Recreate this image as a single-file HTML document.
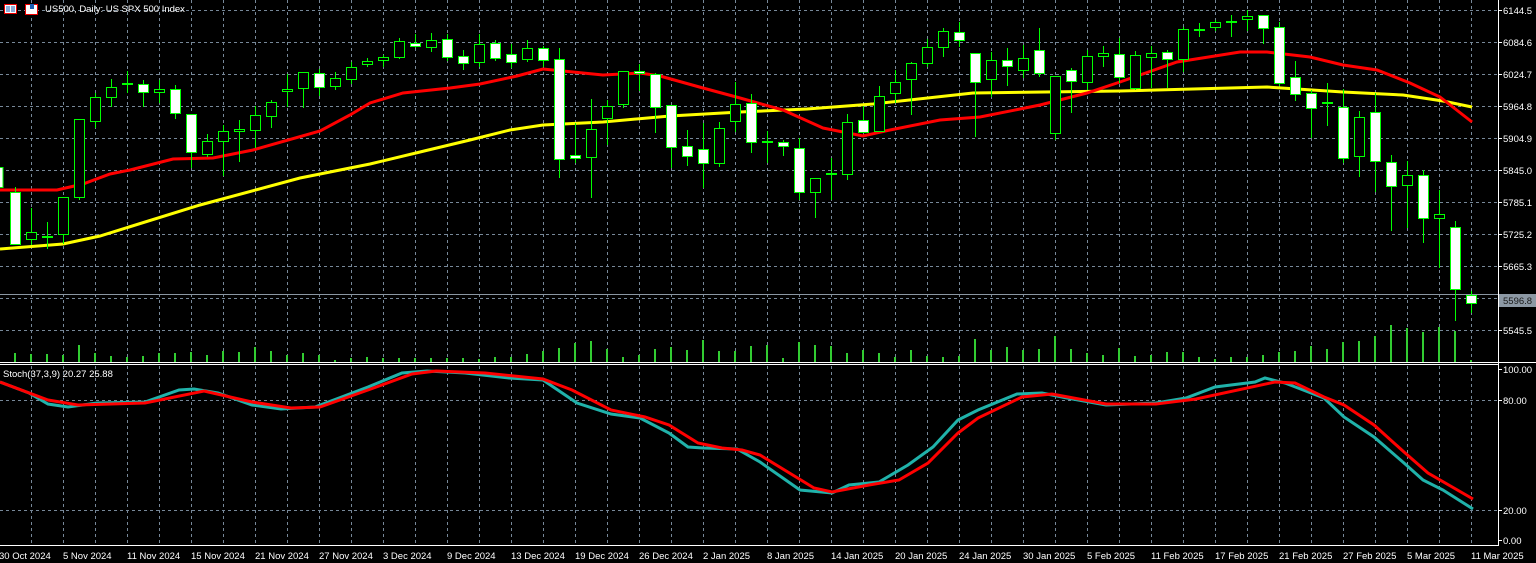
<!DOCTYPE html>
<html><head><meta charset="utf-8"><style>
html,body{margin:0;padding:0;background:#000;overflow:hidden}
svg{display:block}
text{font-family:"Liberation Sans",sans-serif;font-size:9.5px;fill:#fff}
</style></head><body>
<svg width="1536" height="563" viewBox="0 0 1536 563" xmlns="http://www.w3.org/2000/svg">
<rect width="1536" height="563" fill="#000"/>
<g stroke="#778899" stroke-width="1" stroke-dasharray="3,3" fill="none">
<path d="M0 10.5H1498M0 42.5H1498M0 74.5H1498M0 106.5H1498M0 138.5H1498M0 170.5H1498M0 202.5H1498M0 234.5H1498M0 266.5H1498M0 298.5H1498M0 330.5H1498"/>
<path d="M0 400.5H1498M0 510.5H1498"/>
<path d="M31.5 0V545M63.5 0V545M95.5 0V545M127.5 0V545M159.5 0V545M191.5 0V545M223.5 0V545M255.5 0V545M287.5 0V545M319.5 0V545M351.5 0V545M383.5 0V545M415.5 0V545M447.5 0V545M479.5 0V545M511.5 0V545M543.5 0V545M575.5 0V545M607.5 0V545M639.5 0V545M671.5 0V545M703.5 0V545M735.5 0V545M767.5 0V545M799.5 0V545M831.5 0V545M863.5 0V545M895.5 0V545M927.5 0V545M959.5 0V545M991.5 0V545M1023.5 0V545M1055.5 0V545M1087.5 0V545M1119.5 0V545M1151.5 0V545M1183.5 0V545M1215.5 0V545M1247.5 0V545M1279.5 0V545M1311.5 0V545M1343.5 0V545M1375.5 0V545M1407.5 0V545M1439.5 0V545M1471.5 0V545"/>
</g>
<line x1="0" y1="294.5" x2="1498" y2="294.5" stroke="#8a96a2" stroke-width="1"/>
<g stroke="#32cd32" stroke-width="2">
<path d="M15 362v-9M31 362v-8M47 362v-8M63 362v-7M79 362v-17M95 362v-9M111 362v-6M127 362v-5M143 362v-6M159 362v-9M175 362v-9M191 362v-10M207 362v-7M223 362v-11M239 362v-10M255 362v-15M271 362v-11M287 362v-7M303 362v-9M319 362v-7M335 362v-2M351 362v-4M367 362v-5M383 362v-4M399 362v-4M415 362v-4M431 362v-4M447 362v-4M463 362v-4M479 362v-3M495 362v-5M511 362v-5M527 362v-8M543 362v-11M559 362v-14M575 362v-19M591 362v-21M607 362v-13M623 362v-5M639 362v-7M655 362v-13M671 362v-15M687 362v-12M703 362v-22M719 362v-11M735 362v-11M751 362v-16"/>
<path d="M767 362v-17M783 362v-4M799 362v-20M815 362v-17M831 362v-16M847 362v-9M863 362v-12M879 362v-9M895 362v-5M911 362v-12M927 362v-6M943 362v-5M959 362v-6M975 362v-23M991 362v-12M1007 362v-15M1023 362v-12M1039 362v-13M1055 362v-26M1071 362v-13M1087 362v-9M1103 362v-7M1119 362v-14M1135 362v-6M1151 362v-7M1167 362v-10M1183 362v-10M1199 362v-5M1215 362v-3M1231 362v-5M1247 362v-5M1263 362v-7M1279 362v-10M1295 362v-11M1311 362v-16M1327 362v-13M1343 362v-20M1359 362v-21M1375 362v-26M1391 362v-37M1407 362v-34M1423 362v-30M1439 362v-35M1455 362v-31M1471 362v-2"/>
</g>
<polyline fill="none" stroke="#ffff00" stroke-width="3" points="0,249 63,244 100,236 200,205 300,178 370,164 420,152 470,140 510,130 543,125 603,122 670,116 740,112 807,109 873,104 973,93 1120,91 1193,89 1267,87 1343,92 1403,95 1443,101 1472,107"/>
<polyline fill="none" stroke="#ff0000" stroke-width="3" points="0,190 57,190 83,184 110,174 130,170 173,159 213,158 253,150 320,131 350,115 370,103 403,93 450,88 480,84 517,76 543,69 603,75 640,73 660,76 703,88 740,98 783,110 823,128 863,136 890,130 940,120 980,117 1040,105 1087,93 1120,82 1177,62 1240,52 1267,52 1310,57 1343,65 1377,70 1410,83 1440,97 1472,122"/>
<g stroke="#00ff00" stroke-width="1">
<path d="M-1.5 160V190M15.5 187V244M31.5 208V245M47.5 222V249M63.5 197V244M79.5 119V200M95.5 93V128M111.5 79V107M127.5 71V93M143.5 80V107M159.5 80V103M175.5 85V119M191.5 114V168M207.5 134V157M223.5 125V176M239.5 120V162M255.5 106V148M271.5 100V128M287.5 74V107M303.5 72V108M319.5 69V96M335.5 72V90M351.5 62V84M367.5 58V67M383.5 55V67M399.5 38V59M415.5 34V48M431.5 33V52M447.5 34V61M463.5 50V70M479.5 34V67M495.5 40V61M511.5 44V68M527.5 40V62M543.5 46V67M559.5 48V178M575.5 123V163M591.5 99V198M607.5 100V145M623.5 71V108M639.5 64V91M655.5 73V133M671.5 105V168M687.5 130V166M703.5 123V188M719.5 122V167M735.5 82V132M751.5 94V153M767.5 131V163M783.5 140V156M799.5 138V200M815.5 178V218M831.5 158V200M847.5 114V180M863.5 106V132M879.5 86V131M895.5 70V103M911.5 62V115M927.5 39V67M943.5 28V57M959.5 22V47M975.5 53V137M991.5 52V97M1007.5 48V86M1023.5 45V78M1039.5 28V77M1055.5 76V140M1071.5 68V113M1087.5 50V90M1103.5 46V67M1119.5 38V83M1135.5 51V90M1151.5 46V88M1167.5 50V88M1183.5 27V72M1199.5 23V37M1215.5 20V31M1231.5 15V37M1247.5 10V31M1263.5 15V44M1279.5 22V86M1295.5 61V101M1311.5 90V138M1327.5 83V126M1343.5 89V163M1359.5 111V177M1375.5 93V192M1391.5 155V231M1407.5 161V228M1423.5 170V243M1439.5 190V268M1455.5 221V321M1471.5 291V313"/>
</g>
<g stroke="#00ff00" stroke-width="2">
<path d="M42 237H53M122 84H133M762 142H773M826 174H837M1194 30H1205M1226 22H1237M1322 103H1333"/>
</g>
<g stroke="#00ff00" stroke-width="1" fill="#fff">
<rect x="-6" y="167.5" width="9" height="20"/>
<rect x="10.5" y="192.5" width="10" height="52"/>
<rect x="138.5" y="84.5" width="10" height="8"/>
<rect x="170.5" y="89.5" width="10" height="24"/>
<rect x="186.5" y="114.5" width="10" height="38"/>
<rect x="314.5" y="73.5" width="10" height="14"/>
<rect x="410.5" y="43.5" width="10" height="3"/>
<rect x="442.5" y="39.5" width="10" height="18"/>
<rect x="458.5" y="56.5" width="10" height="7"/>
<rect x="490.5" y="43.5" width="10" height="15"/>
<rect x="506.5" y="54.5" width="10" height="8"/>
<rect x="538.5" y="48.5" width="10" height="12"/>
<rect x="554.5" y="59.5" width="10" height="100"/>
<rect x="570.5" y="155.5" width="10" height="3"/>
<rect x="634.5" y="71.5" width="10" height="2"/>
<rect x="650.5" y="74.5" width="10" height="33"/>
<rect x="666.5" y="105.5" width="10" height="42"/>
<rect x="682.5" y="146.5" width="10" height="10"/>
<rect x="698.5" y="149.5" width="10" height="14"/>
<rect x="746.5" y="103.5" width="10" height="39"/>
<rect x="778.5" y="142.5" width="10" height="4"/>
<rect x="794.5" y="148.5" width="10" height="44"/>
<rect x="858.5" y="120.5" width="10" height="12"/>
<rect x="954.5" y="32.5" width="10" height="8"/>
<rect x="970.5" y="53.5" width="10" height="29"/>
<rect x="1002.5" y="60.5" width="10" height="6"/>
<rect x="1034.5" y="50.5" width="10" height="23"/>
<rect x="1066.5" y="70.5" width="10" height="11"/>
<rect x="1114.5" y="54.5" width="10" height="23"/>
<rect x="1162.5" y="52.5" width="10" height="7"/>
<rect x="1258.5" y="15.5" width="10" height="13"/>
<rect x="1274.5" y="27.5" width="10" height="56"/>
<rect x="1290.5" y="77.5" width="10" height="17"/>
<rect x="1306.5" y="93.5" width="10" height="15"/>
<rect x="1338.5" y="107.5" width="10" height="51"/>
<rect x="1370.5" y="112.5" width="10" height="49"/>
<rect x="1386.5" y="162.5" width="10" height="24"/>
<rect x="1418.5" y="175.5" width="10" height="43"/>
<rect x="1450.5" y="227.5" width="10" height="62"/>
<rect x="1466.5" y="295.5" width="10" height="8"/>
</g>
<g stroke="#00ff00" stroke-width="1" fill="#000">
<rect x="26.5" y="232.5" width="10" height="7"/>
<rect x="58.5" y="197.5" width="10" height="37"/>
<rect x="74.5" y="119.5" width="10" height="78"/>
<rect x="90.5" y="97.5" width="10" height="24"/>
<rect x="106.5" y="87.5" width="10" height="10"/>
<rect x="154.5" y="89.5" width="10" height="3"/>
<rect x="202.5" y="141.5" width="10" height="13"/>
<rect x="218.5" y="131.5" width="10" height="10"/>
<rect x="234.5" y="129.5" width="10" height="2"/>
<rect x="250.5" y="115.5" width="10" height="15"/>
<rect x="266.5" y="102.5" width="10" height="14"/>
<rect x="282.5" y="89.5" width="10" height="2"/>
<rect x="298.5" y="72.5" width="10" height="16"/>
<rect x="330.5" y="78.5" width="10" height="8"/>
<rect x="346.5" y="67.5" width="10" height="12"/>
<rect x="362.5" y="61.5" width="10" height="3"/>
<rect x="378.5" y="57.5" width="10" height="3"/>
<rect x="394.5" y="41.5" width="10" height="16"/>
<rect x="426.5" y="40.5" width="10" height="7"/>
<rect x="474.5" y="44.5" width="10" height="18"/>
<rect x="522.5" y="48.5" width="10" height="11"/>
<rect x="586.5" y="129.5" width="10" height="28"/>
<rect x="602.5" y="106.5" width="10" height="12"/>
<rect x="618.5" y="71.5" width="10" height="33"/>
<rect x="714.5" y="128.5" width="10" height="35"/>
<rect x="730.5" y="104.5" width="10" height="17"/>
<rect x="810.5" y="178.5" width="10" height="14"/>
<rect x="842.5" y="122.5" width="10" height="52"/>
<rect x="874.5" y="96.5" width="10" height="35"/>
<rect x="890.5" y="82.5" width="10" height="11"/>
<rect x="906.5" y="63.5" width="10" height="16"/>
<rect x="922.5" y="47.5" width="10" height="16"/>
<rect x="938.5" y="31.5" width="10" height="16"/>
<rect x="986.5" y="60.5" width="10" height="19"/>
<rect x="1018.5" y="58.5" width="10" height="12"/>
<rect x="1050.5" y="76.5" width="10" height="57"/>
<rect x="1082.5" y="56.5" width="10" height="26"/>
<rect x="1098.5" y="53.5" width="10" height="3"/>
<rect x="1130.5" y="55.5" width="10" height="33"/>
<rect x="1146.5" y="53.5" width="10" height="4"/>
<rect x="1178.5" y="29.5" width="10" height="30"/>
<rect x="1210.5" y="22.5" width="10" height="5"/>
<rect x="1242.5" y="16.5" width="10" height="3"/>
<rect x="1354.5" y="117.5" width="10" height="39"/>
<rect x="1402.5" y="175.5" width="10" height="10"/>
<rect x="1434.5" y="214.5" width="10" height="4"/>
</g>
<polyline fill="none" stroke="#20b2aa" stroke-width="3" points="0,382 29,393 48,404 68,407 97,403 145,402 179,390 194,389 218,393 252,405 281,409 315,407 339,398 368,387 402,373 427,371 465,373 509,378 543,380 577,403 611,414 640,418 669,433 688,447 703,448 737,449 760,462 800,490 832,493 849,485 879,482 908,465 933,447 958,420 978,410 1017,394 1042,393 1067,398 1106,405 1156,403 1186,398 1215,387 1255,382 1265,378 1285,383 1324,398 1344,417 1374,437 1404,463 1423,480 1443,490 1473,509"/>
<polyline fill="none" stroke="#ff0000" stroke-width="3" points="0,382 48,400 78,405 145,403 204,391 252,402 291,408 320,407 368,390 412,374 436,371 485,373 543,379 572,390 611,410 645,417 669,425 698,443 722,448 742,450 760,455 814,488 832,492 869,485 899,480 928,463 958,433 978,418 1022,397 1052,394 1106,404 1156,404 1196,399 1275,382 1295,383 1324,397 1344,405 1374,425 1404,452 1428,473 1473,499"/>
<line x1="0" y1="362.5" x2="1536" y2="362.5" stroke="#fff"/>
<line x1="0" y1="364.5" x2="1498" y2="364.5" stroke="#fff"/>
<line x1="1498.5" y1="0" x2="1498.5" y2="546" stroke="#fff"/>
<line x1="0" y1="545.5" x2="1499" y2="545.5" stroke="#fff"/>
<g stroke="#fff">
<path d="M1498 10.5h4M1498 42.5h4M1498 74.5h4M1498 106.5h4M1498 138.5h4M1498 170.5h4M1498 202.5h4M1498 234.5h4M1498 266.5h4M1498 298.5h4M1498 330.5h4M1498 369.5h4M1498 400.5h4M1498 510.5h4M1498 540.5h4"/>
</g>
<g>
<text x="1503" y="14">6144.5</text>
<text x="1503" y="46">6084.6</text>
<text x="1503" y="78">6024.7</text>
<text x="1503" y="110">5964.8</text>
<text x="1503" y="142">5904.9</text>
<text x="1503" y="174">5845.0</text>
<text x="1503" y="206">5785.1</text>
<text x="1503" y="238">5725.2</text>
<text x="1503" y="270">5665.3</text>
<text x="1503" y="302">5605.4</text>
<text x="1503" y="334">5545.5</text>
<text x="1503" y="373">100.00</text>
<text x="1503" y="404">80.00</text>
<text x="1503" y="514">20.00</text>
<text x="1503" y="544">0.00</text>
</g>
<rect x="1499" y="294" width="37" height="13" fill="#8c98a4"/>
<text x="1503" y="304" style="fill:#1a1a1a">5596.8</text>
<rect x="4.5" y="4.5" width="12" height="9" fill="#fff" stroke="#e00" stroke-width="1"/>
<path d="M6 7h4M6 9h4M6 11h4M11 7h4M11 9h4M11 11h4" stroke="#1a5fb4" stroke-width="1"/>
<rect x="25.5" y="4.5" width="12" height="10" fill="#fff" stroke="#e00" stroke-width="1"/>
<rect x="30" y="4" width="4" height="5" fill="#1a5fb4"/>
<text x="45" y="12">US500, Daily: US SPX 500 Index</text>
<text x="3" y="377">Stoch(37,3,9) 20.27 25.88</text>
<g>
<text x="-1" y="559">30 Oct 2024</text>
<text x="63" y="559">5 Nov 2024</text>
<text x="127" y="559">11 Nov 2024</text>
<text x="191" y="559">15 Nov 2024</text>
<text x="255" y="559">21 Nov 2024</text>
<text x="319" y="559">27 Nov 2024</text>
<text x="383" y="559">3 Dec 2024</text>
<text x="447" y="559">9 Dec 2024</text>
<text x="511" y="559">13 Dec 2024</text>
<text x="575" y="559">19 Dec 2024</text>
<text x="639" y="559">26 Dec 2024</text>
<text x="703" y="559">2 Jan 2025</text>
<text x="767" y="559">8 Jan 2025</text>
<text x="831" y="559">14 Jan 2025</text>
<text x="895" y="559">20 Jan 2025</text>
<text x="959" y="559">24 Jan 2025</text>
<text x="1023" y="559">30 Jan 2025</text>
<text x="1087" y="559">5 Feb 2025</text>
<text x="1151" y="559">11 Feb 2025</text>
<text x="1215" y="559">17 Feb 2025</text>
<text x="1279" y="559">21 Feb 2025</text>
<text x="1343" y="559">27 Feb 2025</text>
<text x="1407" y="559">5 Mar 2025</text>
<text x="1471" y="559">11 Mar 2025</text>
</g>
</svg>
</body></html>
